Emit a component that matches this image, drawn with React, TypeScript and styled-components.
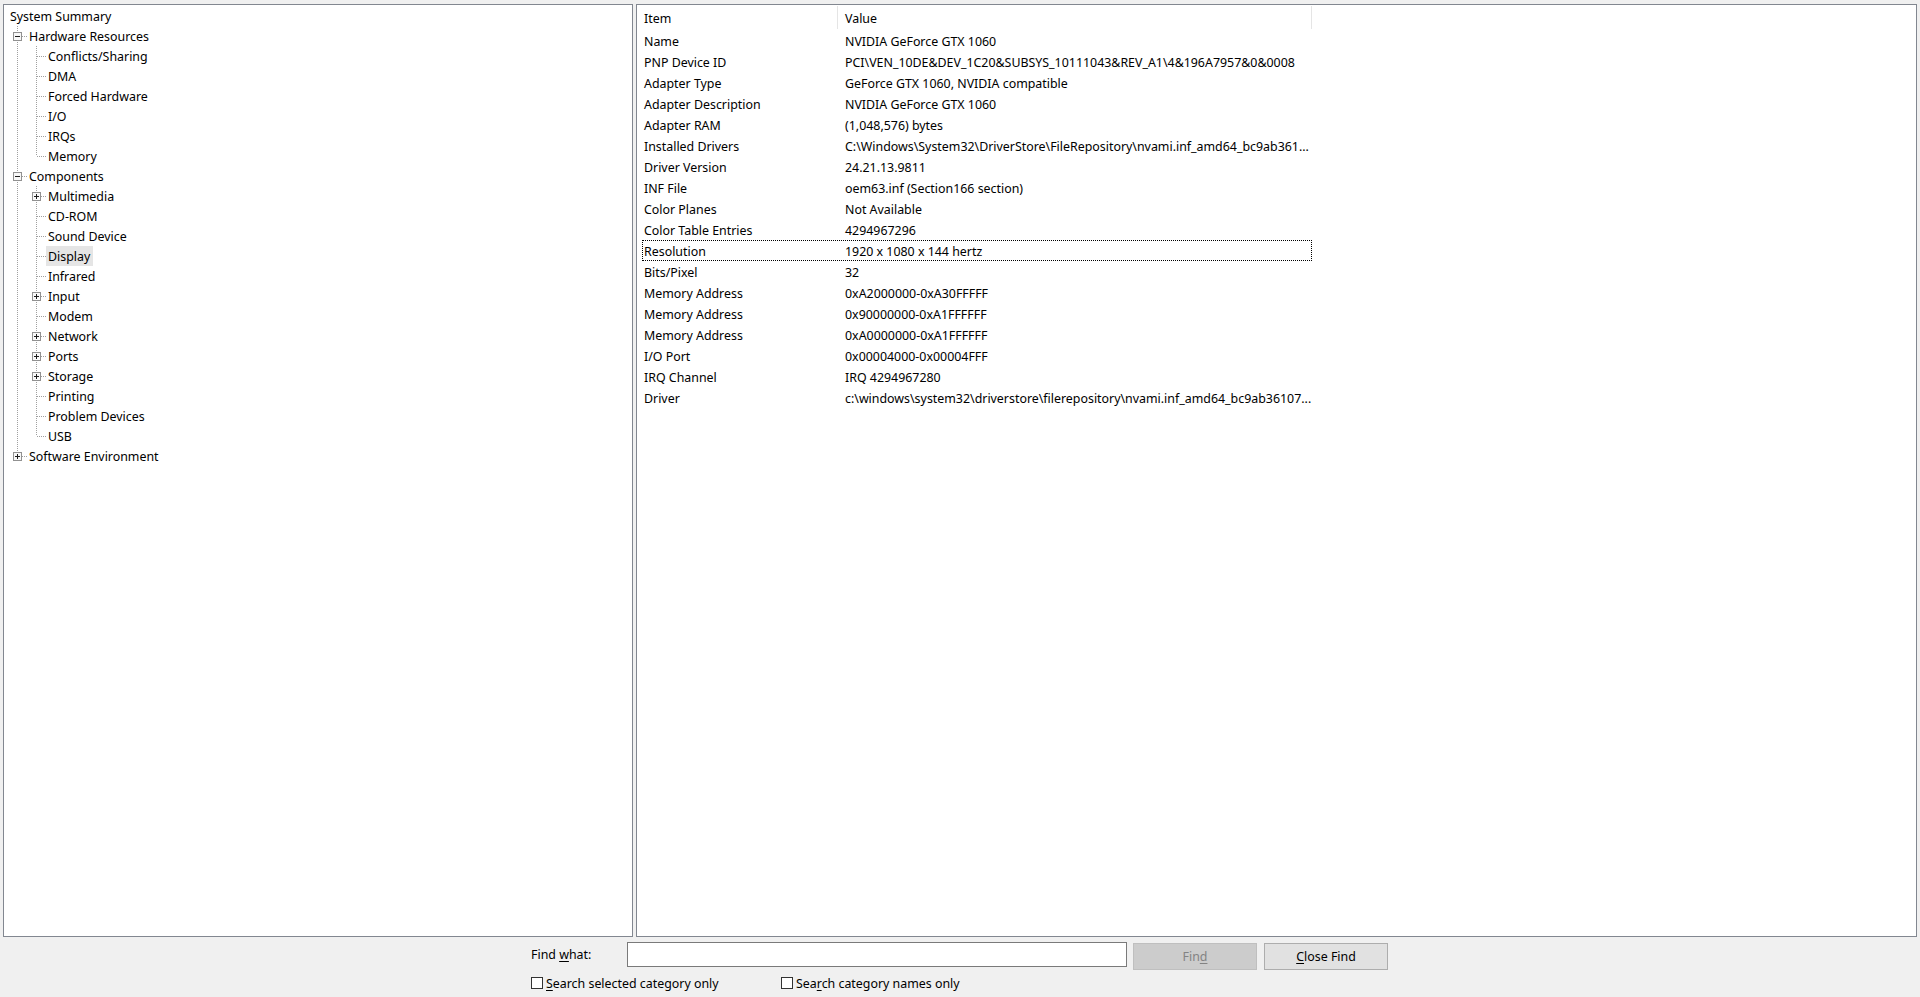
import React from 'react';
import styled, { createGlobalStyle } from 'styled-components';

type Guide = 'pipe' | 'blank' | 'tee' | 'elbow';
type Expander = 'plus' | 'minus' | undefined;

interface TreeItem {
  label: string;
  depth: number;
  expander?: Expander;
  selected?: boolean;
}

interface ListItem {
  item: string;
  value: string;
  focused?: boolean;
}

const treeItems: TreeItem[] = [
  { label: 'System Summary', depth: 0 },
  { label: 'Hardware Resources', depth: 1, expander: 'minus' },
  { label: 'Conflicts/Sharing', depth: 2 },
  { label: 'DMA', depth: 2 },
  { label: 'Forced Hardware', depth: 2 },
  { label: 'I/O', depth: 2 },
  { label: 'IRQs', depth: 2 },
  { label: 'Memory', depth: 2 },
  { label: 'Components', depth: 1, expander: 'minus' },
  { label: 'Multimedia', depth: 2, expander: 'plus' },
  { label: 'CD-ROM', depth: 2 },
  { label: 'Sound Device', depth: 2 },
  { label: 'Display', depth: 2, selected: true },
  { label: 'Infrared', depth: 2 },
  { label: 'Input', depth: 2, expander: 'plus' },
  { label: 'Modem', depth: 2 },
  { label: 'Network', depth: 2, expander: 'plus' },
  { label: 'Ports', depth: 2, expander: 'plus' },
  { label: 'Storage', depth: 2, expander: 'plus' },
  { label: 'Printing', depth: 2 },
  { label: 'Problem Devices', depth: 2 },
  { label: 'USB', depth: 2 },
  { label: 'Software Environment', depth: 1, expander: 'plus' },
];

const listItems: ListItem[] = [
  { item: 'Name', value: 'NVIDIA GeForce GTX 1060' },
  { item: 'PNP Device ID', value: 'PCI\\VEN_10DE&DEV_1C20&SUBSYS_10111043&REV_A1\\4&196A7957&0&0008' },
  { item: 'Adapter Type', value: 'GeForce GTX 1060, NVIDIA compatible' },
  { item: 'Adapter Description', value: 'NVIDIA GeForce GTX 1060' },
  { item: 'Adapter RAM', value: '(1,048,576) bytes' },
  { item: 'Installed Drivers', value: 'C:\\Windows\\System32\\DriverStore\\FileRepository\\nvami.inf_amd64_bc9ab361...' },
  { item: 'Driver Version', value: '24.21.13.9811' },
  { item: 'INF File', value: 'oem63.inf (Section166 section)' },
  { item: 'Color Planes', value: 'Not Available' },
  { item: 'Color Table Entries', value: '4294967296' },
  { item: 'Resolution', value: '1920 x 1080 x 144 hertz', focused: true },
  { item: 'Bits/Pixel', value: '32' },
  { item: 'Memory Address', value: '0xA2000000-0xA30FFFFF' },
  { item: 'Memory Address', value: '0x90000000-0xA1FFFFFF' },
  { item: 'Memory Address', value: '0xA0000000-0xA1FFFFFF' },
  { item: 'I/O Port', value: '0x00004000-0x00004FFF' },
  { item: 'IRQ Channel', value: 'IRQ 4294967280' },
  { item: 'Driver', value: 'c:\\windows\\system32\\driverstore\\filerepository\\nvami.inf_amd64_bc9ab36107...' },
];

const hasLaterSibling = (index: number, depth: number) => {
  for (let j = index + 1; j < treeItems.length; j++) {
    if (treeItems[j].depth < depth) return false;
    if (treeItems[j].depth === depth) return true;
  }
  return false;
};

const guidesFor = (index: number): Guide[] => {
  const { depth } = treeItems[index];
  const guides: Guide[] = [];
  for (let c = 0; c < depth; c++) {
    const level = c + 1;
    if (level === depth) {
      guides.push(hasLaterSibling(index, depth) ? 'tee' : 'elbow');
    } else {
      let anc = index - 1;
      while (anc >= 0 && treeItems[anc].depth !== level) anc--;
      guides.push(anc >= 0 && hasLaterSibling(anc, level) ? 'pipe' : 'blank');
    }
  }
  return guides;
};

const GlobalStyle = createGlobalStyle`
  html, body {
    margin: 0;
    padding: 0;
  }

  body {
    background: #f0f0f0;
    color: #000;
    font-family: "Segoe UI", "Noto Sans", sans-serif;
    font-size: 12.4px;
  }
`;

const Window = styled.div`
  box-sizing: border-box;
  display: flex;
  flex-direction: column;
  height: 997px;
  padding: 4px 3px 0 3px;
  width: 1920px;
`;

const Panes = styled.div`
  display: flex;
  gap: 3px;
  height: 933px;
`;

const Pane = styled.div<{ $width?: number }>`
  background: #fff;
  border: 1px solid #828790;
  box-sizing: border-box;
  flex: ${(p) => (p.$width ? `0 0 ${p.$width}px` : '1 1 auto')};
  overflow: hidden;
`;

const Tree = styled.div`
  padding-top: 1px;
`;

const TreeRow = styled.div`
  align-items: center;
  display: flex;
  height: 20px;
  padding-left: 4px;
`;

const GuideCell = styled.svg`
  display: block;
  flex: 0 0 19px;
  height: 20px;
  width: 19px;
`;

const TreeLabel = styled.span<{ $selected?: boolean }>`
  background: ${(p) => (p.$selected ? '#e5e5e5' : 'transparent')};
  box-sizing: border-box;
  height: 20px;
  line-height: 20px;
  padding: 1px 3px 0 2px;
  white-space: nowrap;
`;

const Header = styled.div`
  display: grid;
  grid-template-columns: 196px 474px;
  height: 25px;
  padding-left: 5px;
`;

const HeaderCell = styled.div<{ $pad: number }>`
  align-items: center;
  border-right: 1px solid #e5e5e5;
  box-sizing: border-box;
  display: flex;
  height: 23px;
  margin-top: 1px;
  padding-left: ${(p) => p.$pad}px;
  padding-top: 1px;
`;

const ListBody = styled.div`
  padding-left: 5px;
`;

const ListRow = styled.div<{ $focused?: boolean }>`
  align-items: center;
  border: 1px dotted ${(p) => (p.$focused ? '#000' : 'transparent')};
  box-sizing: border-box;
  display: grid;
  grid-template-columns: 196px 472px;
  height: 21px;
  width: 670px;
`;

const ListCell = styled.div<{ $pad: number }>`
  padding-left: ${(p) => p.$pad}px;
  padding-top: 1px;
  white-space: nowrap;
`;

const FindBar = styled.div`
  display: flex;
  flex-direction: column;
  padding-left: 525px;
  padding-top: 5px;
`;

const FindRow = styled.div`
  align-items: flex-start;
  display: flex;
  height: 30px;
`;

const FindLabel = styled.label`
  box-sizing: border-box;
  flex: 0 0 99px;
  line-height: 26px;
  padding-left: 3px;
`;

const FindInput = styled.input`
  background: #fff;
  border: 1px solid #7a7a7a;
  box-sizing: border-box;
  height: 25px;
  margin: 0 6px 0 0;
  outline: none;
  width: 500px;
`;

const Button = styled.button<{ $disabled?: boolean }>`
  background: ${(p) => (p.$disabled ? '#cccccc' : '#e1e1e1')};
  border: 1px solid ${(p) => (p.$disabled ? '#bfbfbf' : '#adadad')};
  box-sizing: border-box;
  color: ${(p) => (p.$disabled ? '#838383' : '#000')};
  font: inherit;
  height: 27px;
  margin: 1px 7px 0 0;
  padding: 0;
  width: 124px;
`;

const CheckRow = styled.div`
  align-items: center;
  display: flex;
  height: 20px;
  margin-top: 1px;
`;

const CheckOption = styled.label<{ $width?: number }>`
  align-items: center;
  display: flex;
  flex: ${(p) => (p.$width ? `0 0 ${p.$width}px` : '0 0 auto')};
  padding-left: 3px;
`;

const CheckBox = styled.span`
  background: #fff;
  border: 1px solid #333;
  box-sizing: border-box;
  display: inline-block;
  height: 12px;
  margin-right: 3px;
  width: 12px;
`;

const Key = styled.span`
  text-decoration: underline;
  text-underline-offset: 2px;
`;

const GuideGraphic = ({ guide, expander }: { guide: Guide; expander?: Expander }) => {
  const dots = { stroke: '#a0a0a0', strokeWidth: 1, strokeDasharray: '1 1' };
  return (
    <GuideCell viewBox="0 0 19 20">
      {guide === 'pipe' && <line x1="9.5" y1="0" x2="9.5" y2="20" {...dots} />}
      {guide === 'tee' && <line x1="9.5" y1="0" x2="9.5" y2="20" {...dots} />}
      {guide === 'elbow' && <line x1="9.5" y1="0" x2="9.5" y2="10" {...dots} />}
      {(guide === 'tee' || guide === 'elbow') && <line x1="10" y1="10.5" x2="19" y2="10.5" {...dots} />}
      {expander && (
        <g>
          <rect x="5.5" y="6.5" width="8" height="8" fill="#f7f7f7" stroke="#919191" />
          <line x1="7" y1="10.5" x2="12" y2="10.5" stroke="#1c1c1c" />
          {expander === 'plus' && <line x1="9.5" y1="8" x2="9.5" y2="13" stroke="#1c1c1c" />}
        </g>
      )}
    </GuideCell>
  );
};

const App = () => (
  <Window>
    <GlobalStyle />
    <Panes>
      <Pane $width={630}>
        <Tree>
          {treeItems.map((node, i) => {
            const guides = guidesFor(i);
            return (
              <TreeRow key={node.label}>
                {guides.map((g, c) => (
                  <GuideGraphic key={c} guide={g} expander={c === guides.length - 1 ? node.expander : undefined} />
                ))}
                <TreeLabel $selected={node.selected}>{node.label}</TreeLabel>
              </TreeRow>
            );
          })}
        </Tree>
      </Pane>
      <Pane>
        <Header>
          <HeaderCell $pad={2}>Item</HeaderCell>
          <HeaderCell $pad={7}>Value</HeaderCell>
        </Header>
        <ListBody>
          {listItems.map((row, i) => (
            <ListRow key={i} $focused={row.focused}>
              <ListCell $pad={1}>{row.item}</ListCell>
              <ListCell $pad={6}>{row.value}</ListCell>
            </ListRow>
          ))}
        </ListBody>
      </Pane>
    </Panes>
    <FindBar>
      <FindRow>
        <FindLabel>
          Find <Key>w</Key>hat:
        </FindLabel>
        <FindInput type="text" />
        <Button $disabled>
          Fin<Key>d</Key>
        </Button>
        <Button>
          <Key>C</Key>lose Find
        </Button>
      </FindRow>
      <CheckRow>
        <CheckOption $width={247}>
          <CheckBox />
          <span>
            <Key>S</Key>earch selected category only
          </span>
        </CheckOption>
        <CheckOption>
          <CheckBox />
          <span>
            Sea<Key>r</Key>ch category names only
          </span>
        </CheckOption>
      </CheckRow>
    </FindBar>
  </Window>
);

export default App;
